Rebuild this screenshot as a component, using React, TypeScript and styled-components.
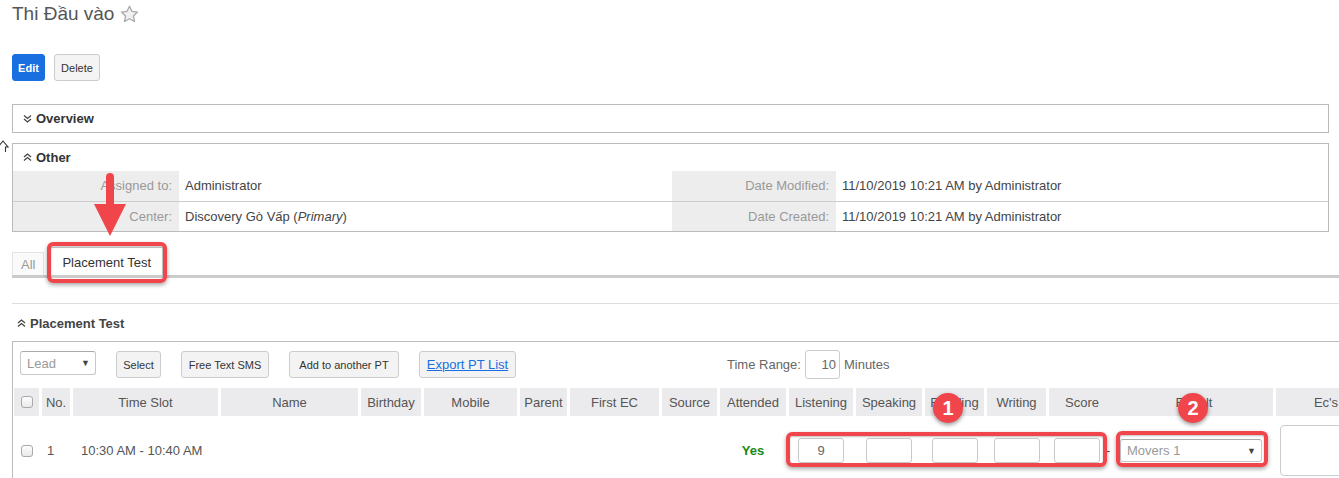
import React from "react";
import styled, { createGlobalStyle } from "styled-components";

const GlobalStyle = createGlobalStyle`
  html, body {
    margin: 0;
    padding: 0;
    background: #fff;
    overflow: hidden;
  }
  body {
    font-family: "Liberation Sans", Arial, Helvetica, sans-serif;
    font-size: 13px;
    color: #444;
  }
`;

const RED = "#f0454a";

const Page = styled.div`
  position: relative;
  width: 1339px;
  height: 478px;
  overflow: hidden;
  padding: 1px 0 0 12px;
  box-sizing: border-box;
`;

const Title = styled.h1`
  display: flex;
  align-items: center;
  gap: 6px;
  margin: 0;
  font-size: 19px;
  line-height: 26px;
  font-weight: normal;
  color: #555;
`;

const ButtonRow = styled.div`
  display: flex;
  gap: 9px;
  margin-top: 27px;
`;

const Btn = styled.button<{ $primary?: boolean; $w: number }>`
  width: ${(p) => p.$w}px;
  height: 27px;
  padding: 0;
  font-family: inherit;
  font-size: 11px;
  font-weight: ${(p) => (p.$primary ? "bold" : "normal")};
  color: ${(p) => (p.$primary ? "#fff" : "#333")};
  background: ${(p) => (p.$primary ? "#1a6fe0" : "#f4f4f4")};
  border: 1px solid ${(p) => (p.$primary ? "#1a6fe0" : "#ccc")};
  border-radius: 3px;
  box-sizing: border-box;
`;

const Panel = styled.section<{ $mt: number }>`
  width: 1317px;
  box-sizing: border-box;
  margin-top: ${(p) => p.$mt}px;
  border: 1px solid #bbb;
`;

const PanelHead = styled.div`
  display: flex;
  align-items: center;
  gap: 4px;
  height: 27px;
  padding-left: 10px;
  font-size: 13px;
  font-weight: bold;
  color: #333;
`;

const InfoRow = styled.div<{ $divider?: boolean }>`
  display: grid;
  grid-template-columns: 166px 493px 164px 1fr;
  height: 30px;
  box-sizing: border-box;
  border-top: ${(p) => (p.$divider ? "1px solid #ccc" : "none")};
`;

const Label = styled.div`
  background: #ededed;
  color: #999;
  text-align: right;
  padding-right: 7px;
  line-height: 29px;
`;

const Value = styled.div`
  color: #444;
  padding-left: 6px;
  line-height: 29px;
`;

const Tabs = styled.div`
  display: flex;
  align-items: flex-end;
  gap: 6px;
  margin-top: 15px;
  width: 1400px;
  border-bottom: 3px solid #cbcbcb;
`;

const Tab = styled.div<{ $active?: boolean }>`
  height: ${(p) => (p.$active ? 28 : 23)}px;
  box-sizing: border-box;
  padding: 0 ${(p) => (p.$active ? 11 : 8)}px;
  line-height: ${(p) => (p.$active ? 30 : 23)}px;
  font-size: 13px;
  color: ${(p) => (p.$active ? "#333" : "#999")};
  background: ${(p) => (p.$active ? "#fff" : "#fafafa")};
  border: 1px solid ${(p) => (p.$active ? "#ccc" : "#e3e3e3")};
  border-bottom: none;
`;

const Rule = styled.hr`
  margin: 25px 0 0;
  width: 1400px;
  border: none;
  border-top: 1px solid #ddd;
`;

const SectionHead = styled.div`
  display: flex;
  align-items: center;
  gap: 4px;
  height: 18px;
  margin-top: 10px;
  padding-left: 5px;
  font-size: 13px;
  font-weight: bold;
  color: #444;
`;

const Box = styled.div`
  margin-top: 9px;
  width: 1500px;
  border-top: 1px solid #bbb;
  border-left: 1px solid #bbb;
`;

const Toolbar = styled.div`
  display: flex;
  align-items: flex-start;
  gap: 20px;
  padding: 9px 7px 0;
  height: 37px;
  box-sizing: border-box;
`;

const SelectBox = styled.div<{ $w: number; $h: number }>`
  display: flex;
  align-items: center;
  justify-content: space-between;
  width: ${(p) => p.$w}px;
  height: ${(p) => p.$h}px;
  box-sizing: border-box;
  padding: 0 5px 0 6px;
  border: 1px solid #c8c8c8;
  border-top-color: #aaa;
  border-radius: 3px;
  font-size: 13px;
  color: #999;
  background: #fff;
`;

const Caret = styled.span`
  font-size: 9px;
  color: #444;
`;

const ToolBtn = styled.button<{ $w: number }>`
  width: ${(p) => p.$w}px;
  height: 27px;
  font-family: inherit;
  font-size: 11px;
  color: #333;
  background: #f3f3f3;
  border: 1px solid #ccc;
  border-radius: 3px;
  padding: 0;
`;

const LinkBtn = styled(ToolBtn)`
  font-size: 13px;
  color: #1a6fe0;
  text-decoration: underline;
`;

const TimeRange = styled.div`
  display: flex;
  align-items: center;
  gap: 4px;
  margin-left: 191px;
  margin-top: -1px;
  color: #666;
  font-size: 13px;
`;

const NumInput = styled.div`
  width: 35px;
  height: 29px;
  box-sizing: border-box;
  border: 1px solid #ccc;
  border-radius: 3px;
  text-align: right;
  padding-right: 3px;
  line-height: 27px;
  color: #666;
`;

const Table = styled.div`
  margin-top: 9px;
  padding-left: 1px;
`;

const HeadRow = styled.div`
  display: flex;
  height: 28px;
`;

const HeadCell = styled.div<{ $w: number; $mr: number }>`
  display: flex;
  align-items: center;
  justify-content: center;
  flex: none;
  width: ${(p) => p.$w}px;
  margin-right: ${(p) => p.$mr}px;
  background: #ebebed;
  color: #555;
  font-size: 13px;
  white-space: nowrap;
  overflow: hidden;
`;

const BodyRow = styled.div`
  display: flex;
  align-items: center;
  padding: 9px 0;
`;

const Cell = styled.div<{ $w: number; $mr: number; $align?: string; $pl?: number }>`
  display: flex;
  align-items: center;
  justify-content: ${(p) => p.$align || "flex-start"};
  flex: none;
  width: ${(p) => p.$w}px;
  margin-right: ${(p) => p.$mr}px;
  padding-left: ${(p) => p.$pl || 0}px;
  box-sizing: border-box;
  color: #555;
  font-size: 13px;
  white-space: nowrap;
`;

const Check = styled.span`
  display: inline-block;
  width: 12px;
  height: 12px;
  box-sizing: border-box;
  border: 1px solid #a9a9a9;
  border-radius: 3px;
  background: linear-gradient(#fdfdfd, #e9e9e9);
`;

const Yes = styled.span`
  color: #168a16;
  font-weight: bold;
`;

const ScoreInput = styled.div`
  width: 46px;
  height: 25px;
  box-sizing: border-box;
  border: 1px solid #c9c9c9;
  border-radius: 3px;
  text-align: center;
  line-height: 24px;
  color: #666;
`;

const Dash = styled.span`
  margin-left: 6px;
`;

const TextArea = styled.div`
  margin-left: 4px;
  width: 80px;
  height: 51px;
  box-sizing: border-box;
  border: 1px solid #ccc;
  border-radius: 4px;
`;

/* annotation overlays */
const Callout = styled.div<{ $x: number; $y: number; $w: number; $h: number }>`
  position: absolute;
  left: ${(p) => p.$x}px;
  top: ${(p) => p.$y}px;
  width: ${(p) => p.$w}px;
  height: ${(p) => p.$h}px;
  box-sizing: border-box;
  border: 4px solid ${RED};
  border-radius: 6px;
  box-shadow: 0 2px 4px rgba(0, 0, 0, 0.35), inset 0 1px 2px rgba(0, 0, 0, 0.25);
`;

const Badge = styled.div<{ $x: number; $y: number }>`
  position: absolute;
  left: ${(p) => p.$x - 15}px;
  top: ${(p) => p.$y - 15}px;
  width: 30px;
  height: 30px;
  border-radius: 50%;
  background: ${RED};
  color: #fff;
  font-weight: bold;
  font-size: 20px;
  line-height: 30px;
  text-align: center;
  box-shadow: 0 2px 4px rgba(0, 0, 0, 0.4);
`;

const Overlay = styled.svg<{ $x: number; $y: number }>`
  position: absolute;
  left: ${(p) => p.$x}px;
  top: ${(p) => p.$y}px;
`;

const Star = () => (
  <svg width="19" height="18" viewBox="0 0 24 23">
    <path
      d="M12 1.5l3.1 6.6 7.2.9-5.3 5 1.4 7.1L12 17.6l-6.4 3.5L7 14l-5.3-5 7.2-.9z"
      fill="#f0f0f0"
      stroke="#a8a8a8"
      strokeWidth="1.6"
      strokeLinejoin="round"
    />
  </svg>
);

const Chevrons = ({ up }: { up?: boolean }) => (
  <svg width="9" height="9" viewBox="0 0 9 9" style={{ transform: up ? "rotate(180deg)" : undefined }}>
    <path d="M1 1.5l3.5 3 3.5-3M1 5l3.5 3 3.5-3" fill="none" stroke="#444" strokeWidth="1.3" />
  </svg>
);

type Col = { label: string; w: number; mr: number };
const cols: Col[] = [
  { label: "", w: 25, mr: 3 },
  { label: "No.", w: 28, mr: 3 },
  { label: "Time Slot", w: 145, mr: 3 },
  { label: "Name", w: 137, mr: 3 },
  { label: "Birthday", w: 60, mr: 3 },
  { label: "Mobile", w: 93, mr: 3 },
  { label: "Parent", w: 47, mr: 3 },
  { label: "First EC", w: 89, mr: 3 },
  { label: "Source", w: 55, mr: 3 },
  { label: "Attended", w: 66, mr: 3 },
  { label: "Listening", w: 64, mr: 3 },
  { label: "Speaking", w: 66, mr: 3 },
  { label: "Reading", w: 59, mr: 3 },
  { label: "Writing", w: 59, mr: 3 },
  { label: "Score", w: 66, mr: 0 },
  { label: "Result", w: 158, mr: 3 },
  { label: "Ec's", w: 100, mr: 3 },
];

export default function App() {
  const c = cols;
  return (
    <>
      <GlobalStyle />
      <Page>
        <Title>
          Thi Đầu vào <Star />
        </Title>
        <ButtonRow>
          <Btn $primary $w={33}>Edit</Btn>
          <Btn $w={46}>Delete</Btn>
        </ButtonRow>

        <Panel $mt={23}>
          <PanelHead>
            <Chevrons />
            Overview
          </PanelHead>
        </Panel>

        <Panel $mt={10}>
          <PanelHead>
            <Chevrons up />
            Other
          </PanelHead>
          <InfoRow>
            <Label>Assigned to:</Label>
            <Value>Administrator</Value>
            <Label>Date Modified:</Label>
            <Value>11/10/2019 10:21 AM by Administrator</Value>
          </InfoRow>
          <InfoRow $divider>
            <Label>Center:</Label>
            <Value>
              Discovery Gò Vấp (<i>Primary</i>)
            </Value>
            <Label>Date Created:</Label>
            <Value>11/10/2019 10:21 AM by Administrator</Value>
          </InfoRow>
        </Panel>

        <Tabs>
          <Tab>All</Tab>
          <Tab $active>Placement Test</Tab>
        </Tabs>

        <Rule />

        <SectionHead>
          <Chevrons up />
          Placement Test
        </SectionHead>

        <Box>
          <Toolbar>
            <SelectBox $w={76} $h={24}>
              Lead <Caret>▼</Caret>
            </SelectBox>
            <ToolBtn $w={45}>Select</ToolBtn>
            <ToolBtn $w={88}>Free Text SMS</ToolBtn>
            <ToolBtn $w={110}>Add to another PT</ToolBtn>
            <LinkBtn $w={97}>Export PT List</LinkBtn>
            <TimeRange>
              Time Range:
              <NumInput>10</NumInput>
              Minutes
            </TimeRange>
          </Toolbar>

          <Table>
            <HeadRow>
              {c.map((col, i) => (
                <HeadCell key={i} $w={col.w} $mr={col.mr}>
                  {i === 0 ? <Check /> : col.label}
                </HeadCell>
              ))}
            </HeadRow>
            <BodyRow>
              <Cell $w={c[0].w} $mr={c[0].mr} $align="center">
                <Check />
              </Cell>
              <Cell $w={c[1].w} $mr={c[1].mr} $pl={5}>1</Cell>
              <Cell $w={c[2].w} $mr={c[2].mr} $pl={8}>10:30 AM - 10:40 AM</Cell>
              {c.slice(3, 9).map((col, i) => (
                <Cell key={i} $w={col.w} $mr={col.mr} />
              ))}
              <Cell $w={c[9].w} $mr={c[9].mr} $align="center">
                <Yes>Yes</Yes>
              </Cell>
              {c.slice(10, 14).map((col, i) => (
                <Cell key={i} $w={col.w} $mr={col.mr} $align="center">
                  <ScoreInput>{i === 0 ? "9" : ""}</ScoreInput>
                </Cell>
              ))}
              <Cell $w={c[14].w} $mr={c[14].mr} $pl={5}>
                <ScoreInput />
                <Dash>-</Dash>
              </Cell>
              <Cell $w={c[15].w} $mr={c[15].mr} $pl={5}>
                <SelectBox $w={142} $h={23}>
                  Movers 1 <Caret>▼</Caret>
                </SelectBox>
              </Cell>
              <Cell $w={c[16].w} $mr={0}>
                <TextArea />
              </Cell>
            </BodyRow>
          </Table>
        </Box>

        {/* annotations */}
        <Overlay $x={0} $y={139} width="9" height="14" viewBox="0 0 9 14">
          <path d="M-2 8 L3 2 L8 8 L5.5 8 L5.5 13" fill="none" stroke="#333" strokeWidth="1.1" />
        </Overlay>
        <Overlay $x={92} $y={170} width="36" height="70" viewBox="0 0 36 70">
          <path d="M14 36 V7 a4 4 0 0 1 8 0 V36 Z" fill={RED} />
          <path d="M2 34 H34 L18 66 Z" fill={RED} />
        </Overlay>
        <Callout $x={47} $y={242} $w={120} $h={41} />
        <Callout $x={786} $y={432} $w={321} $h={35} />
        <Callout $x={1116} $y={431} $w={152} $h={36} />
        <Badge $x={948} $y={408}>1</Badge>
        <Badge $x={1193} $y={408}>2</Badge>
      </Page>
    </>
  );
}
